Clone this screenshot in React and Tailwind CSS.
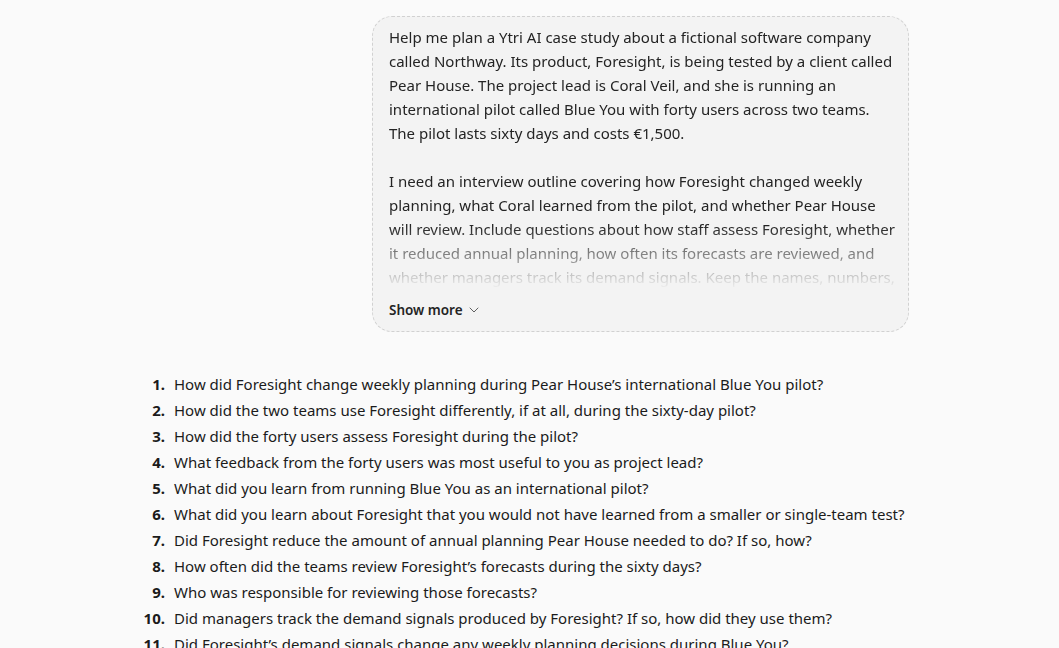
import { ChevronDown } from "lucide-react";

const para1 = [
  "Help me plan a Ytri AI case study about a fictional software company",
  "called Northway. Its product, Foresight, is being tested by a client called",
  "Pear House. The project lead is Coral Veil, and she is running an",
  "international pilot called Blue You with forty users across two teams.",
  "The pilot lasts sixty days and costs €1,500.",
];

const para2 = [
  "I need an interview outline covering how Foresight changed weekly",
  "planning, what Coral learned from the pilot, and whether Pear House",
  "will review. Include questions about how staff assess Foresight, whether",
  "it reduced annual planning, how often its forecasts are reviewed, and",
  "whether managers track its demand signals. Keep the names, numbers,",
  "and details consistent throughout.",
];

const questions = [
  "How did Foresight change weekly planning during Pear House’s international Blue You pilot?",
  "How did the two teams use Foresight differently, if at all, during the sixty-day pilot?",
  "How did the forty users assess Foresight during the pilot?",
  "What feedback from the forty users was most useful to you as project lead?",
  "What did you learn from running Blue You as an international pilot?",
  "What did you learn about Foresight that you would not have learned from a smaller or single-team test?",
  "Did Foresight reduce the amount of annual planning Pear House needed to do? If so, how?",
  "How often did the teams review Foresight’s forecasts during the sixty days?",
  "Who was responsible for reviewing those forecasts?",
  "Did managers track the demand signals produced by Foresight? If so, how did they use them?",
  "Did Foresight’s demand signals change any weekly planning decisions during Blue You?",
  "Will Pear House review the results of the pilot? If so, who will take part?",
];

function PromptBubble() {
  return (
    <div className="ml-auto w-[537px] rounded-[20px] border border-dashed border-[#d1d1d1] bg-[#f3f3f3] pl-4 pr-2 pt-2 pb-[11px] text-[15px] leading-6 text-[#242424]">
      <div className="h-[264px] overflow-hidden [mask-image:linear-gradient(to_bottom,black_76%,transparent_100%)]">
        <p className="whitespace-nowrap">
          {para1.map((line, i) => (
            <span key={i}>
              {line}
              <br />
            </span>
          ))}
        </p>
        <p className="mt-6 whitespace-nowrap">
          {para2.map((line, i) => (
            <span key={i}>
              {line}
              <br />
            </span>
          ))}
        </p>
      </div>
      <button className="mt-[11px] flex items-center gap-[3px] text-[13.5px] font-semibold leading-5 text-[#242424]">
        Show more
        <ChevronDown size={16} strokeWidth={1.25} className="text-[#424242]" />
      </button>
    </div>
  );
}

export default function App() {
  return (
    <div className="min-h-[648px] overflow-hidden bg-[#fafafa] font-['Noto_Sans',sans-serif]">
      <div className="ml-[138px] w-[771px] pt-4">
        <PromptBubble />
        <ol className="mt-[39px] text-[15px] leading-[26px] text-[#1b1b1b]">
          {questions.map((q, i) => (
            <li key={i} className="flex whitespace-nowrap">
              <span className="w-[27px] shrink-0 text-right font-bold">{i + 1}.</span>
              <span className="ml-[9px]">{q}</span>
            </li>
          ))}
        </ol>
      </div>
    </div>
  );
}
